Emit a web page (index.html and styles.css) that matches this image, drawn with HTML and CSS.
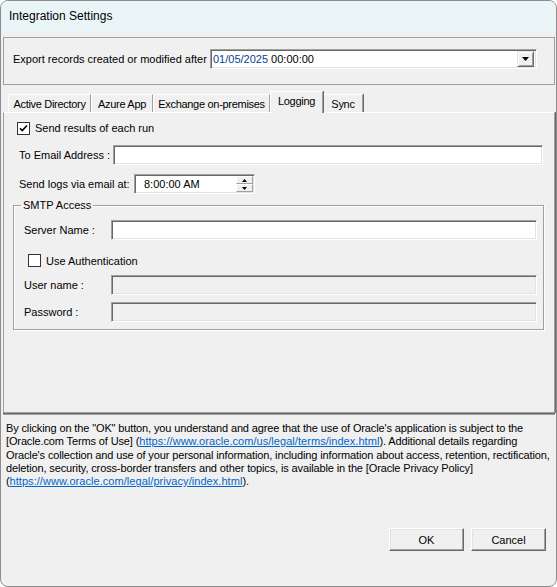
FILE: index.html
```html
<!DOCTYPE html>
<html>
<head>
<meta charset="utf-8">
<link rel="stylesheet" href="styles.css">
</head>
<body>
<div class="window">
  <div class="titlebar">Integration Settings</div>
  <div class="client">
    <div class="export-panel">
      <span class="export-label">Export records created or modified after</span>
      <div class="combo">
        <span class="combo-text"><span class="date-part">01/05/2025</span> 00:00:00</span>
        <span class="dd-btn"><svg width="7" height="4" viewBox="0 0 7 4"><path d="M0 0H7L3.5 4Z" fill="#000"/></svg></span>
      </div>
    </div>

    <div class="tabs">
      <div class="tab tab-ad">Active Directory</div>
      <div class="tab tab-azure">Azure App</div>
      <div class="tab tab-exch">Exchange on-premises</div>
      <div class="tab tab-log selected">Logging</div>
      <div class="tab tab-sync">Sync</div>
    </div>

    <div class="tabpage">
      <div class="row row-send">
        <span class="checkbox checked"><svg width="9" height="9" viewBox="0 0 9 9"><path d="M1 4.2L3.3 6.5L8 1.5" fill="none" stroke="#000" stroke-width="1.6"/></svg></span>
        <span class="cb-label">Send results of each run</span>
      </div>
      <div class="row row-email">
        <span class="lbl lbl-email">To Email Address :</span>
        <div class="input input-email"></div>
      </div>
      <div class="row row-time">
        <span class="lbl lbl-time">Send logs via email at:</span>
        <div class="input timepicker">
          <span class="time-text">8:00:00 AM</span>
          <span class="spin">
            <span class="spin-btn"><svg width="5" height="3" viewBox="0 0 5 3"><path d="M0 3H5L2.5 0Z" fill="#000"/></svg></span>
            <span class="spin-btn"><svg width="5" height="3" viewBox="0 0 5 3"><path d="M0 0H5L2.5 3Z" fill="#000"/></svg></span>
          </span>
        </div>
      </div>

      <fieldset class="smtp">
        <legend>SMTP Access</legend>
        <div class="row row-server">
          <span class="lbl lbl-grp">Server Name :</span>
          <div class="input input-grp"></div>
        </div>
        <div class="row row-auth">
          <span class="checkbox"></span>
          <span class="cb-label">Use Authentication</span>
        </div>
        <div class="row row-user">
          <span class="lbl lbl-grp">User name :</span>
          <div class="input input-grp disabled"></div>
        </div>
        <div class="row row-pass">
          <span class="lbl lbl-grp">Password :</span>
          <div class="input input-grp disabled"></div>
        </div>
      </fieldset>
    </div>

    <div class="notice">By clicking on the "OK" button, you understand and agree that the use of Oracle's application is subject to the [Oracle.com Terms of Use] (<a href="#">https://www.oracle.com/us/legal/terms/index.html</a>). Additional details regarding Oracle's collection and use of your personal information, including information about access, retention, rectification, deletion, security, cross-border transfers and other topics, is available in the [Oracle Privacy Policy] (<a href="#">https://www.oracle.com/legal/privacy/index.html</a>).</div>

    <div class="buttons">
      <div class="btn">OK</div>
      <div class="btn">Cancel</div>
    </div>
  </div>
</div>
</body>
</html>
```

FILE: styles.css
```css
* { box-sizing: border-box; }
html, body { margin: 0; padding: 0; background: #ffffff; }
body {
  font-family: "Liberation Sans", Arial, sans-serif;
  font-size: 11px;
  color: #000;
}
.window {
  width: 557px;
  height: 587px;
  border: 1px solid #8c8c8c;
  border-radius: 8px;
  overflow: hidden;
  background: #f0f0f0;
  display: flex;
  flex-direction: column;
}
.titlebar {
  flex: none;
  height: 30px;
  background: #eaf5f8;
  font-size: 12px;
  padding-left: 8px;
  display: flex;
  align-items: center;
  color: #000;
}
.client {
  flex: 1;
  display: flex;
  flex-direction: column;
  padding: 0 1px 0 2px;
}

/* export panel */
.export-panel {
  flex: none;
  margin-top: 6px;
  height: 48px;
  border: 1px solid #a0a0a0;
  display: flex;
  align-items: flex-start;
  padding: 11px 0 0 9px;
}
.export-label {
  width: 197px;
  white-space: nowrap;
  line-height: 20px;
}
.combo {
  width: 327px;
  height: 20px;
  background: #fff;
  border-top: 1px solid #a0a0a0;
  border-left: 1px solid #a0a0a0;
  border-right: 1px solid #fff;
  border-bottom: 1px solid #fff;
  box-shadow: inset 1px 1px 0 #696969, inset -1px -1px 0 #e3e3e3;
  display: flex;
  align-items: center;
  padding: 0 2px 0 2px;
}
.combo-text { flex: 1; white-space: nowrap; }
.date-part { color: #0b3f8f; }
.dd-btn {
  width: 17px;
  height: 16px;
  background: #f0f0f0;
  border-top: 1px solid #e3e3e3;
  border-left: 1px solid #e3e3e3;
  border-right: 1px solid #696969;
  border-bottom: 1px solid #696969;
  box-shadow: inset 1px 1px 0 #fff, inset -1px -1px 0 #a0a0a0;
  display: flex;
  align-items: center;
  justify-content: center;
}

/* tabs */
.tabs {
  flex: none;
  margin-top: 7px;
  height: 21px;
  display: flex;
  align-items: flex-end;
  padding-left: 5px;
  margin-bottom: -1px;
}
.tab {
  height: 19px;
  background: #f0f0f0;
  border-top: 1px solid #fff;
  border-left: 1px solid #fff;
  border-right: 1px solid #a0a0a0;
  box-shadow: 1px 0 0 #696969;
  display: flex;
  align-items: center;
  justify-content: center;
  white-space: nowrap;
  padding-bottom: 1px;
  letter-spacing: -0.3px;
}
.tab-ad { width: 83px; }
.tab-azure { width: 62px; }
.tab-exch { width: 117px; }
.tab-log { width: 53px; }
.tab-sync { width: 40px; }
.tab.selected {
  height: 22px;
  position: relative;
  z-index: 2;
  padding-bottom: 3px;
}

/* tab page */
.tabpage {
  flex: none;
  height: 301px;
  border-top: 1px solid #fff;
  border-left: 1px solid #a0a0a0;
  border-right: 1px solid #a0a0a0;
  border-bottom: 1px solid #a0a0a0;
  box-shadow: 1px 0 0 #696969;
  display: flex;
  flex-direction: column;
  padding-left: 13px;
}
.row { display: flex; align-items: center; }
.row-send { margin-top: 8px; height: 14px; }
.checkbox {
  width: 13px;
  height: 13px;
  background: #fff;
  border: 1px solid #333;
  display: flex;
  align-items: center;
  justify-content: center;
  flex: none;
}
.cb-label { margin-left: 5px; white-space: nowrap; }
.lbl { white-space: nowrap; flex: none; }
.row-email { margin-top: 10px; height: 20px; padding-left: 2px; }
.lbl-email { width: 94px; }
.input {
  height: 20px;
  background: #fff;
  border-top: 1px solid #a0a0a0;
  border-left: 1px solid #a0a0a0;
  border-right: 1px solid #fff;
  border-bottom: 1px solid #fff;
  box-shadow: inset 1px 1px 0 #696969, inset -1px -1px 0 #e3e3e3;
}
.input-email { width: 430px; }
.row-time { margin-top: 9px; height: 20px; padding-left: 2px; }
.lbl-time { width: 115px; }
.timepicker {
  width: 121px;
  display: flex;
  align-items: center;
  padding: 2px 1px 2px 9px;
}
.time-text { flex: 1; white-space: nowrap; }
.spin {
  width: 17px;
  height: 16px;
  display: flex;
  flex-direction: column;
  gap: 0;
}
.spin-btn {
  flex: 1;
  background: #f0f0f0;
  border: 1px solid #fff;
  border-right-color: #a0a0a0;
  border-bottom-color: #a0a0a0;
  display: flex;
  align-items: center;
  justify-content: center;
}

/* group box */
.smtp {
  margin: 5px 10px 0 -4px;
  padding: 0 0 0 0;
  border: 1px solid #a0a0a0;
  box-shadow: inset 1px 1px 0 #fff, 1px 1px 0 #fff;
  height: 131px;
  display: flex;
  flex-direction: column;
  min-width: 0;
}
.smtp legend {
  margin-left: 7px;
  padding: 0 2px;
  line-height: 13px;
}
.row-server { margin-top: 8px; height: 20px; padding-left: 10px; }
.lbl-grp { width: 87px; }
.input-grp { width: 426px; }
.input.disabled { background: #f0f0f0; }
.row-auth { margin-top: 14px; height: 13px; padding-left: 14px; }
.row-user { margin-top: 8px; height: 20px; padding-left: 10px; }
.row-pass { margin-top: 7px; height: 20px; padding-left: 10px; }

/* notice */
.notice {
  flex: none;
  border-top: 1px solid #696969;
  box-shadow: inset 0 1px 0 #a0a0a0;
  margin-top: 0;
  padding: 8px 1px 0 3px;
  line-height: 13.3px;
  letter-spacing: -0.13px;
}
.notice a {
  color: #0066cc;
  text-decoration: underline;
  letter-spacing: 0.05px;
}

/* buttons */
.buttons {
  margin-top: auto;
  margin-bottom: 35px;
  display: flex;
  justify-content: flex-end;
  gap: 7px;
  padding-right: 9px;
}
.btn {
  width: 75px;
  height: 23px;
  background: #f0f0f0;
  border-top: 1px solid #fff;
  border-left: 1px solid #fff;
  border-right: 1px solid #696969;
  border-bottom: 1px solid #696969;
  box-shadow: inset -1px -1px 0 #a0a0a0, inset 1px 1px 0 #e3e3e3;
  display: flex;
  align-items: center;
  justify-content: center;
}
```
